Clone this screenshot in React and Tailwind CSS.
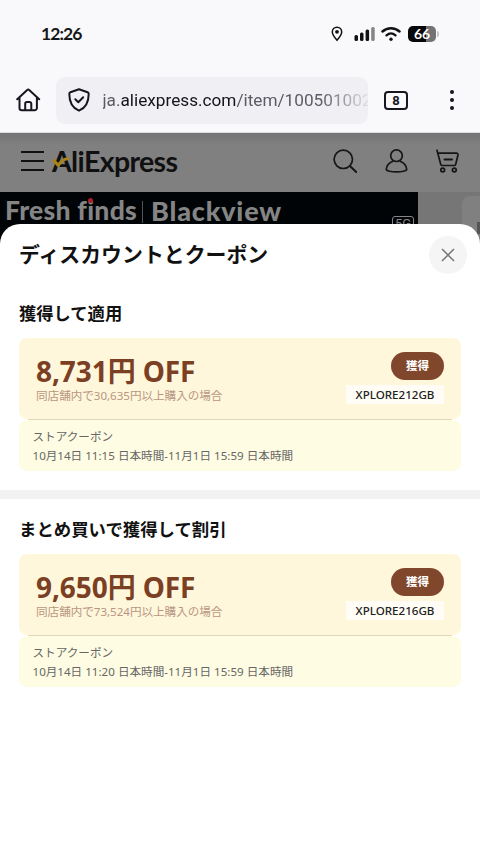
const coupons = [
  {
    heading: '獲得して適用',
    price: '8,731円 OFF',
    condition: '同店舗内で30,635円以上購入の場合',
    code: 'XPLORE212GB',
    period: '10月14日 11:15 日本時間-11月1日 15:59 日本時間',
  },
  {
    heading: 'まとめ買いで獲得して割引',
    price: '9,650円 OFF',
    condition: '同店舗内で73,524円以上購入の場合',
    code: 'XPLORE216GB',
    period: '10月14日 11:20 日本時間-11月1日 15:59 日本時間',
  },
];

function StatusBar() {
  return (
    <div className="flex h-[68px] items-center pl-[41px] pr-[44px]">
      <span className="font-['Lato'] text-[17.5px] font-bold leading-5 tracking-[-0.9px] text-[#161616]">12:26</span>
      <svg className="ml-auto" width="12" height="16" viewBox="0 0 12 16" fill="none">
        <path d="M6 14.2C3.3 11 1.3 8.6 1.3 5.9a4.7 4.7 0 0 1 9.4 0c0 2.700-2 5.100-4.700 8.300z" stroke="#111" strokeWidth="1.500" />
        <circle cx="6" cy="5.800" r="1.900" fill="#111" />
      </svg>
      <svg className="ml-[11px]" width="21" height="14" viewBox="0 0 21 14">
        <rect x="0.500" y="8" width="3.500" height="6" rx="1.500" fill="#111" />
        <rect x="6" y="5.500" width="3.500" height="8.500" rx="1.500" fill="#111" />
        <rect x="11.600" y="2.500" width="3.500" height="11.500" rx="1.500" fill="#111" />
        <rect x="17.200" y="0" width="3.500" height="14" rx="1.500" fill="#858585" />
      </svg>
      <svg className="ml-[6px]" width="20" height="16" viewBox="0 0 20 16" fill="none" stroke="#111" strokeLinecap="round">
        <path d="M1.500 5.500C6.300 1 13.700 1 18.500 5.500" strokeWidth="2.500" />
        <path d="M5.500 9.400c2.700-2.400 6.300-2.400 9 0" strokeWidth="2.300" />
        <circle cx="10" cy="13.200" r="1.700" fill="#111" stroke="none" />
      </svg>
      <div className="ml-[7px] flex h-[16px] w-[28px] items-center justify-center rounded-[5px] bg-[linear-gradient(90deg,#080808_66%,#737373_66%)] font-['Lato'] text-[14px] font-bold leading-none text-white">66</div>
      <div className="-mr-[3px] ml-[1px] h-[6px] w-[2px] rounded-r bg-[#c5c5c7]" />
    </div>
  );
}

function BrowserBar() {
  return (
    <div className="flex h-[65px] items-center border-b border-[#dddddf]">
      <svg className="ml-4" width="25" height="24" viewBox="0 0 25 24" fill="none" stroke="#17151f" strokeWidth="2" strokeLinecap="round" strokeLinejoin="round">
        <path d="M1.200 11.200 11.200 2a1.500 1.500 0 0 1 2 0l10 9.200M3.500 9.500V20a2.300 2.300 0 0 0 2.300 2.300h12.800a2.300 2.300 0 0 0 2.300-2.300V9.500M9.200 22V15.800a1.800 1.800 0 0 1 1.800-1.800h2.500a1.800 1.800 0 0 1 1.800 1.800V22" />
      </svg>
      <div className="ml-[15px] flex h-[47px] w-[312px] items-center overflow-hidden rounded-[9px] bg-[#f0f0f4]">
        <svg className="ml-3 shrink-0" width="22" height="24" viewBox="0 0 22 24" fill="none" stroke="#17151f" strokeWidth="2" strokeLinecap="round" strokeLinejoin="round">
          <path d="M11 1.200 19.600 4.200a1.700 1.700 0 0 1 1.100 1.700C20.700 14 18.500 19.500 11 22.700 3.500 19.500 1.300 14 1.300 5.900a1.700 1.700 0 0 1 1.100-1.700z" />
          <path d="m7.300 11.300 3 2.900 4.900-4.900" />
        </svg>
        <div className="ml-[12.500px] w-[265px] overflow-hidden whitespace-nowrap font-['Roboto'] text-[17.200px] leading-6 text-[#5b5b66] [mask-image:linear-gradient(90deg,#000_82%,transparent_102%)]">
          ja.<span className="text-[#15141a]">aliexpress.com</span>/item/100501002
        </div>
      </div>
      <div className="ml-4 flex h-[19px] w-[24px] items-center justify-center rounded-[4px] border-2 border-[#17151f] font-['Roboto'] text-[13px] font-bold leading-none text-[#17151f]">8</div>
      <div className="ml-[42px] flex flex-col gap-[4px]">
        <div className="size-[4px] rounded-full bg-[#17151f]" />
        <div className="size-[4px] rounded-full bg-[#17151f]" />
        <div className="size-[4px] rounded-full bg-[#17151f]" />
      </div>
    </div>
  );
}

function StoreHeader() {
  return (
    <div className="flex h-[59px] items-center bg-linear-to-b from-[#747474] to-[#808080] to-20% pb-[4px]">
      <div className="ml-[21px] flex h-[20px] w-[23px] flex-col justify-between">
        <div className="h-[2px] bg-[#111]" />
        <div className="h-[2px] bg-[#111]" />
        <div className="h-[2px] bg-[#111]" />
      </div>
      <div className="relative ml-[8px] flex h-7 w-[128px] items-center whitespace-nowrap font-['Lato'] text-[28.500px] font-bold leading-7 tracking-[-0.650px] text-[#101010]">
        AliExpress
        <svg className="absolute left-0 top-[8px]" width="18" height="13" viewBox="0 0 18 13" fill="none">
          <path d="M1 4.500 6.300 10.500C8.300 6.500 11.500 4 17 3.200" stroke="#a9821a" strokeWidth="3" />
        </svg>
      </div>
      <svg className="ml-[153px]" width="24" height="24" viewBox="0 0 24 24" fill="none" stroke="#151515" strokeWidth="1.700" strokeLinecap="round">
        <circle cx="10.300" cy="10.300" r="9.200" />
        <path d="m17.200 17.200 6 5.800" strokeWidth="2" />
      </svg>
      <svg className="ml-[28px]" width="23" height="24" viewBox="0 0 23 24" fill="none" stroke="#151515" strokeWidth="1.700">
        <circle cx="11.500" cy="6.700" r="5.800" />
        <path d="M8 12.300C4.500 13.600 1.500 16.800 1.300 20.300c-.1 3.500 20.500 3.500 20.400 0-.2-3.500-3.200-6.700-6.700-8" />
      </svg>
      <svg className="ml-[28px]" width="23" height="24" viewBox="0 0 23 24" fill="none" stroke="#151515" strokeWidth="1.700" strokeLinecap="round" strokeLinejoin="round">
        <path d="M1 1.200 4.700 15.200a1.800 1.800 0 0 0 1.800 1.300H18a1.800 1.800 0 0 0 1.700-1.300L22 6a1.500 1.500 0 0 0-1.500-1.800H2.500" />
        <path d="M8.500 10.500h7.500" strokeWidth="2" />
        <circle cx="6.700" cy="21" r="1.900" />
        <circle cx="18.300" cy="21" r="1.900" />
      </svg>
    </div>
  );
}

function Banner() {
  return (
    <div className="flex h-[53px] bg-[#767676]">
      <div className="flex w-[418px] items-start bg-[#010407] pl-[5px] pt-[2px] text-[#858585]">
        <span className="relative w-[134px] whitespace-nowrap font-['Lato'] text-[26.500px] font-black leading-8 tracking-[0.250px]">
          Fresh finds
          <i className="absolute left-[83px] top-[4px] size-[5px] rounded-full bg-[#a91f2b]" />
        </span>
        <span className="ml-[3px] mt-[7px] h-[22px] w-px bg-[#555]" />
        <span className="ml-[8px] mt-[1px] w-[132px] whitespace-nowrap font-['Lato'] text-[27px] font-black leading-8 tracking-[0.800px]">Blackview</span>
        <span className="ml-auto mr-[4px] mt-[22px] flex h-[14px] w-[22px] items-start justify-center rounded-[3px] border border-[#858585] font-['Roboto'] text-[13px] leading-[14px]">5G</span>
      </div>
      <div className="ml-auto mt-[4px] flex h-12 w-[18px] items-start justify-end rounded-tl-lg bg-[#808080] pt-[26px]">
        <div className="h-[12px] w-[3px] bg-[#555]" />
      </div>
    </div>
  );
}

function Coupon({ coupon }) {
  return (
    <div className="mx-[19px]">
      <div className="flex h-[81px] justify-between rounded-lg bg-[#fff7dc] pl-[17px] pr-[17px] pt-[14px]">
        <div className="whitespace-nowrap">
          <div className="h-[35px] text-[28px] font-bold leading-[38px] tracking-[-0.080px] text-[#7b4024]">{coupon.price}</div>
          <div className="text-[11.600px] leading-[17px] tracking-[-0.030px] text-[#b99580]">{coupon.condition}</div>
        </div>
        <div className="flex flex-col items-end">
          <button className="h-[28px] w-[53px] rounded-full bg-[#80472c] text-[11.600px] font-bold leading-[28px] text-white">獲得</button>
          <div className="mt-[5px] h-[19px] w-[98px] whitespace-nowrap bg-[#fffdf6] text-center text-[11.600px] font-medium leading-[20px] text-[#222]">{coupon.code}</div>
        </div>
      </div>
      <div className="mx-[9px] h-px bg-[#e3d8bc]" />
      <div className="h-[51px] whitespace-nowrap rounded-lg bg-[#fefce3] pl-[13.500px] pt-[7px] text-[11.600px] leading-[19px] text-[#666]">
        <div>ストアクーポン</div>
        <div>{coupon.period}</div>
      </div>
    </div>
  );
}

export default function App() {
  return (
    <div className="flex h-[854px] w-[480px] flex-col overflow-hidden bg-[#f9f9fb] font-['Noto_Sans','Noto_Sans_CJK_JP',sans-serif]">
      <StatusBar />
      <BrowserBar />
      <StoreHeader />
      <Banner />
      <div className="relative -mt-[21px] flex-1 rounded-t-[20px] bg-white">
        <div className="flex h-[61px] items-center justify-between pl-[19px] pr-[13px]">
          <h1 className="text-[20.900px] font-bold text-[#111]">ディスカウントとクーポン</h1>
          <button className="flex size-[38px] items-center justify-center rounded-full bg-[#f5f5f5]">
            <svg width="14" height="14" viewBox="0 0 14 14" stroke="#777" strokeWidth="1.500"><path d="m1 1 12 12M13 1 1 13" /></svg>
          </button>
        </div>
        <section className="h-[205px] pt-[15px]">
          <h2 className="mb-[11px] ml-[19px] h-[27px] text-[17.300px] font-bold leading-[27px] text-[#111]">{coupons[0].heading}</h2>
          <Coupon coupon={coupons[0]} />
        </section>
        <div className="h-[9px] bg-[#f2f2f2]" />
        <section className="pt-[16.500px]">
          <h2 className="mb-[11px] ml-[19px] h-[27px] text-[17.400px] font-bold leading-[27px] text-[#111]">{coupons[1].heading}</h2>
          <Coupon coupon={coupons[1]} />
        </section>
      </div>
    </div>
  );
}
